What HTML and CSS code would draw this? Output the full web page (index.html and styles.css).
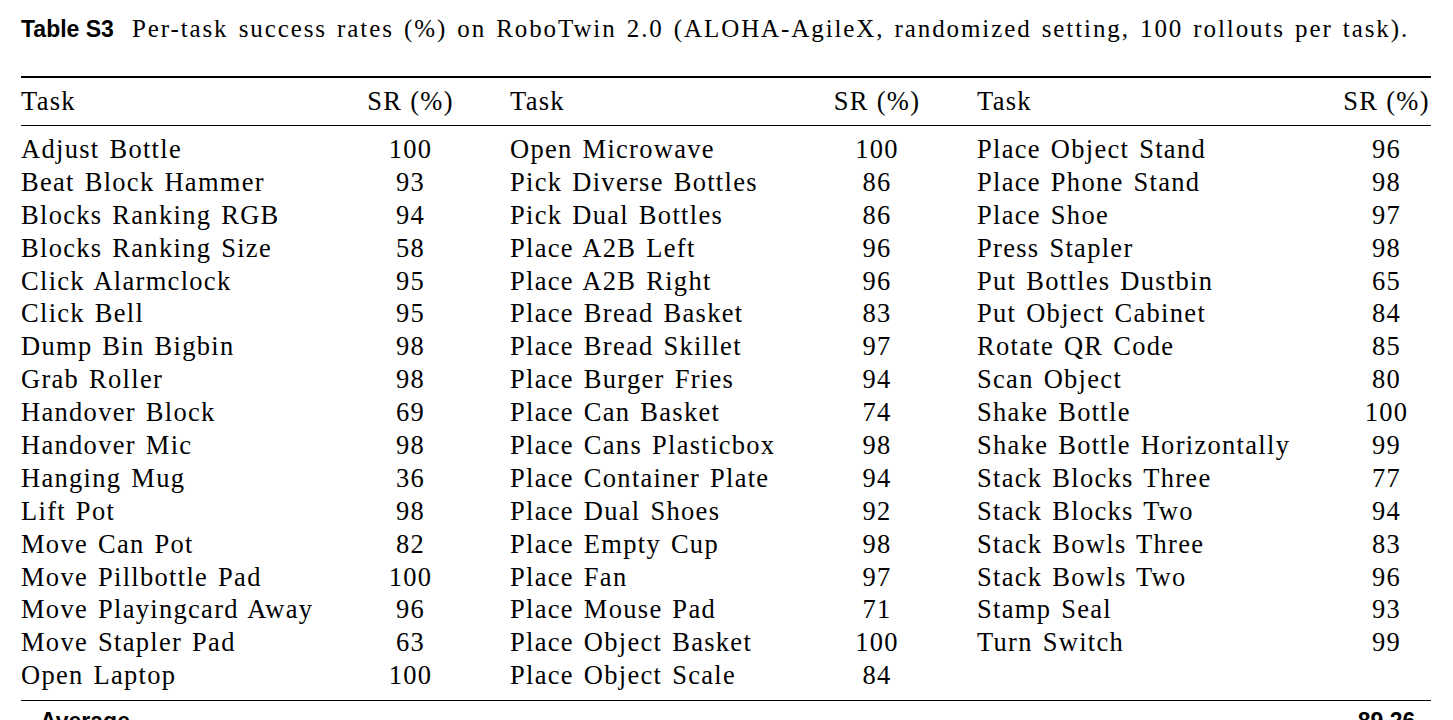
FILE: index.html
```html
<!DOCTYPE html>
<html lang="en">
<head>
<meta charset="utf-8">
<title>Table S3</title>
<link rel="stylesheet" href="styles.css">
</head>
<body>
<p class="caption"><span class="label">Table S3</span><span class="ctext">Per-task success rates (%) on RoboTwin 2.0 (ALOHA-AgileX, randomized setting, 100 rollouts per task).</span></p>
<div class="table">
  <div class="grid head">
    <div class="task">Task</div><div class="sr">SR (%)</div>
    <div class="task c2">Task</div><div class="sr">SR (%)</div>
    <div class="task c3">Task</div><div class="sr">SR (%)</div>
  </div>
  <div class="grid body">
    <div class="task">Adjust Bottle</div><div class="sr">100</div><div class="task c2">Open Microwave</div><div class="sr">100</div><div class="task c3">Place Object Stand</div><div class="sr">96</div>
    <div class="task">Beat Block Hammer</div><div class="sr">93</div><div class="task c2">Pick Diverse Bottles</div><div class="sr">86</div><div class="task c3">Place Phone Stand</div><div class="sr">98</div>
    <div class="task">Blocks Ranking RGB</div><div class="sr">94</div><div class="task c2">Pick Dual Bottles</div><div class="sr">86</div><div class="task c3">Place Shoe</div><div class="sr">97</div>
    <div class="task">Blocks Ranking Size</div><div class="sr">58</div><div class="task c2">Place A2B Left</div><div class="sr">96</div><div class="task c3">Press Stapler</div><div class="sr">98</div>
    <div class="task">Click Alarmclock</div><div class="sr">95</div><div class="task c2">Place A2B Right</div><div class="sr">96</div><div class="task c3">Put Bottles Dustbin</div><div class="sr">65</div>
    <div class="task">Click Bell</div><div class="sr">95</div><div class="task c2">Place Bread Basket</div><div class="sr">83</div><div class="task c3">Put Object Cabinet</div><div class="sr">84</div>
    <div class="task">Dump Bin Bigbin</div><div class="sr">98</div><div class="task c2">Place Bread Skillet</div><div class="sr">97</div><div class="task c3">Rotate QR Code</div><div class="sr">85</div>
    <div class="task">Grab Roller</div><div class="sr">98</div><div class="task c2">Place Burger Fries</div><div class="sr">94</div><div class="task c3">Scan Object</div><div class="sr">80</div>
    <div class="task">Handover Block</div><div class="sr">69</div><div class="task c2">Place Can Basket</div><div class="sr">74</div><div class="task c3">Shake Bottle</div><div class="sr">100</div>
    <div class="task">Handover Mic</div><div class="sr">98</div><div class="task c2">Place Cans Plasticbox</div><div class="sr">98</div><div class="task c3">Shake Bottle Horizontally</div><div class="sr">99</div>
    <div class="task">Hanging Mug</div><div class="sr">36</div><div class="task c2">Place Container Plate</div><div class="sr">94</div><div class="task c3">Stack Blocks Three</div><div class="sr">77</div>
    <div class="task">Lift Pot</div><div class="sr">98</div><div class="task c2">Place Dual Shoes</div><div class="sr">92</div><div class="task c3">Stack Blocks Two</div><div class="sr">94</div>
    <div class="task">Move Can Pot</div><div class="sr">82</div><div class="task c2">Place Empty Cup</div><div class="sr">98</div><div class="task c3">Stack Bowls Three</div><div class="sr">83</div>
    <div class="task">Move Pillbottle Pad</div><div class="sr">100</div><div class="task c2">Place Fan</div><div class="sr">97</div><div class="task c3">Stack Bowls Two</div><div class="sr">96</div>
    <div class="task">Move Playingcard Away</div><div class="sr">96</div><div class="task c2">Place Mouse Pad</div><div class="sr">71</div><div class="task c3">Stamp Seal</div><div class="sr">93</div>
    <div class="task">Move Stapler Pad</div><div class="sr">63</div><div class="task c2">Place Object Basket</div><div class="sr">100</div><div class="task c3">Turn Switch</div><div class="sr">99</div>
    <div class="task">Open Laptop</div><div class="sr">100</div><div class="task c2">Place Object Scale</div><div class="sr">84</div><div class="task c3"></div><div class="sr"></div>
  </div>
  <div class="avg">
    <div class="avg-label">Average</div>
    <div class="avg-value">89.26</div>
  </div>
</div>
</body>
</html>
```
FILE: styles.css
```css
html, body {
  margin: 0;
  padding: 0;
  background: #ffffff;
  color: #000000;
}
body {
  padding: 0 22px 0 21px;
  overflow: hidden;
  height: 720px;
}
.caption {
  margin: 0;
  padding-top: 16px;
  height: 76px;
  box-sizing: border-box;
  line-height: 26px;
  white-space: nowrap;
}
.label {
  font-family: "Liberation Sans", Arial, sans-serif;
  font-weight: bold;
  font-size: 23px;
  margin-right: 18px;
}
.ctext {
  font-family: "Liberation Serif", "Times New Roman", serif;
  font-size: 25px;
  letter-spacing: 1.9px;
  word-spacing: 2px;
}
.table {
  width: 1410px;
  border-top: 2px solid #000;
  font-family: "Liberation Serif", "Times New Roman", serif;
  font-size: 26.5px;
  letter-spacing: 1.3px;
  word-spacing: 2px;
}
.grid {
  display: grid;
  grid-template-columns: 345px 89px 378px 88px 421px 89px;
}
.head {
  height: 47px;
  align-items: center;
  border-bottom: 1.5px solid #000;
}
.body {
  padding: 7px 0 8px;
  grid-auto-rows: 32.9px;
  align-items: center;
  border-bottom: 1.5px solid #000;
}
.task {
  white-space: nowrap;
}
.c2 { padding-left: 55px; }
.c3 { padding-left: 56px; }
.sr {
  text-align: center;
  white-space: nowrap;
}
.head .sr { letter-spacing: 1.3px; word-spacing: 0; }
.avg {
  display: flex;
  justify-content: space-between;
  padding-top: 6px;
  font-family: "Liberation Sans", Arial, sans-serif;
  font-weight: bold;
  font-size: 23px;
  letter-spacing: 0;
  word-spacing: 0;
  line-height: 28px;
}
.avg-label { padding-left: 19px; }
.avg-value { width: 89px; text-align: center; }
```
